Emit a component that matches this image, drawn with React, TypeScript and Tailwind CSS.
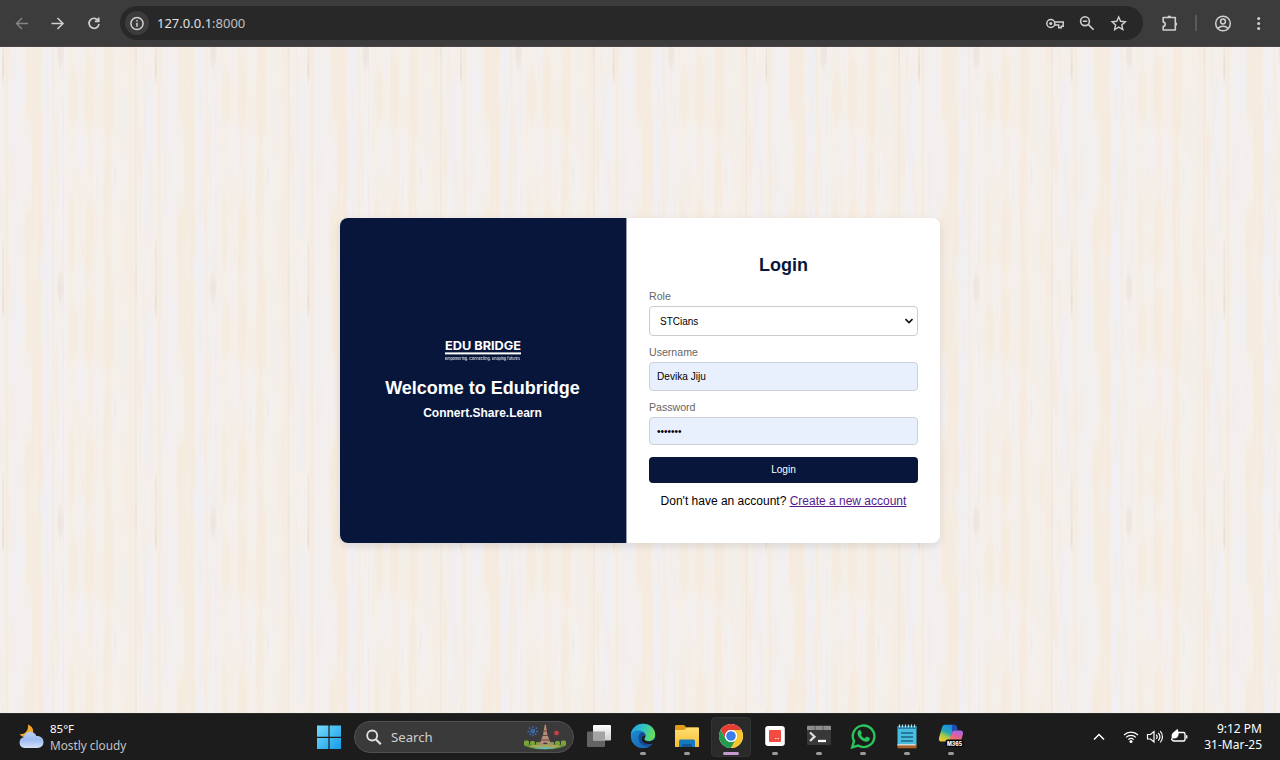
import type { ReactNode } from "react";

const TILE_W = 152.65;
const TILE_H = 234;

type Stripe = { x: number; w: number; y?: number; h?: number; fill: string; o?: number };

const CREAM = "#f6ebdf";
const PALE = "#f3f0ef";
const LILAC = "#f1eff1";
const BROWN = "#e3d4c7";

const stripes: Stripe[] = [
  { x: 0, w: 2, fill: PALE },
  { x: 2.5, w: 1.2, y: 8, h: 30, fill: BROWN, o: 0.7 },
  { x: 2.5, w: 1.2, y: 190, h: 80, fill: BROWN, o: 0.6 },
  { x: 5, w: 3, fill: CREAM, o: 0.7 },
  { x: 9, w: 15, fill: PALE, o: 0.9 },
  { x: 16, w: 9, y: 15, h: 55, fill: LILAC },
  { x: 20, w: 11, y: 85, h: 65, fill: PALE },
  { x: 26, w: 16, y: -30, h: 110, fill: CREAM },
  { x: 32, w: 10, y: 60, h: 110, fill: CREAM },
  { x: 25, w: 18, y: 155, h: 90, fill: CREAM },
  { x: 43, w: 9, fill: LILAC },
  { x: 40, w: 16, y: 200, h: 45, fill: LILAC },
  { x: 52.5, w: 1.5, fill: CREAM },
  { x: 56, w: 10, fill: PALE },
  { x: 57.5, w: 5.5, y: -10, h: 34, fill: BROWN, o: 0.4 },
  { x: 57.5, w: 5.5, y: 222, h: 32, fill: BROWN, o: 0.4 },
  { x: 63, w: 0.8, fill: BROWN, o: 0.3 },
  { x: 69, w: 9, y: 20, h: 60, fill: CREAM, o: 0.7 },
  { x: 69, w: 6, y: 145, h: 80, fill: CREAM, o: 0.7 },
  { x: 76, w: 10, y: 75, h: 60, fill: PALE },
  { x: 78, w: 7, y: 0, h: 45, fill: PALE },
  { x: 78, w: 7, y: 210, h: 50, fill: PALE },
  { x: 85, w: 8, y: 5, h: 80, fill: CREAM },
  { x: 86, w: 8, y: 150, h: 80, fill: CREAM },
  { x: 93, w: 10, y: 80, h: 85, fill: PALE },
  { x: 104, w: 9, y: -10, h: 105, fill: CREAM },
  { x: 104, w: 7, y: 100, h: 140, fill: CREAM, o: 0.9 },
  { x: 114, w: 7, y: 100, h: 60, fill: PALE },
  { x: 115, w: 1, y: 118, h: 20, fill: BROWN, o: 0.5 },
  { x: 119, w: 9, y: 40, h: 60, fill: PALE, o: 0.7 },
  { x: 129, w: 5, fill: CREAM, o: 0.6 },
  { x: 135.3, w: 1, fill: BROWN, o: 0.45 },
  { x: 138, w: 4, y: 75, h: 60, fill: CREAM },
  { x: 143, w: 10, y: 25, h: 170, fill: LILAC },
  { x: 144, w: 5, y: 195, h: 60, fill: PALE },
];

function grain(): Stripe[] {
  let seed = 71;
  const next = () => {
    seed = (seed * 16807) % 2147483647;
    return seed / 2147483647;
  };
  return Array.from({ length: 130 }, () => ({
    x: next() * TILE_W,
    w: 0.7 + next() * 2.6,
    y: next() * TILE_H - 20,
    h: 20 + next() * 70,
    fill: next() > 0.45 ? CREAM : PALE,
    o: 0.3 + next() * 0.35,
  }));
}

const allStripes = [...stripes, ...grain()];

function WoodTexture() {
  return (
    <svg className="absolute inset-0 h-full w-full" aria-hidden="true">
      <defs>
        <g id="grain-tile">
          {allStripes.map((s, i) => {
            const y = s.y ?? -20;
            const h = s.h ?? TILE_H + 40;
            const e = Math.min(12, h / 3);
            const m = s.x + s.w / 2;
            return (
              <path
                key={i}
                d={`M${m} ${y}L${s.x + s.w} ${y + e}V${y + h - e}L${m} ${y + h}L${s.x} ${y + h - e}V${y + e}Z`}
                fill={s.fill}
                opacity={s.o ?? 1}
              />
            );
          })}
        </g>
        <pattern id="wood" width={TILE_W} height={TILE_H} patternUnits="userSpaceOnUse">
          <rect width={TILE_W} height={TILE_H} fill="#f5efe9" />
          <use href="#grain-tile" y={-TILE_H} />
          <use href="#grain-tile" y={TILE_H} />
          <use href="#grain-tile" />
        </pattern>
        <filter id="soften" x="0" y="0" width="1" height="1">
          <feGaussianBlur stdDeviation="0.5 3" />
        </filter>
      </defs>
      <rect x="-20" y="-20" width="1320" height="710" fill="url(#wood)" filter="url(#soften)" />
    </svg>
  );
}

function Line({ children, className, size = 18, sw = 1.6 }: { children: ReactNode; className?: string; size?: number; sw?: number }) {
  return (
    <svg
      width={size}
      height={size}
      viewBox={`0 0 ${size} ${size}`}
      fill="none"
      stroke="currentColor"
      strokeWidth={sw}
      className={`shrink-0 ${className ?? ""}`}
    >
      {children}
    </svg>
  );
}

function BrowserBar() {
  return (
    <header className="flex h-[47px] shrink-0 items-start border-b border-[#4a4547] bg-[#3c3c3c] pt-1.5 text-[#d0d0d0]">
      <div className="flex h-[34px] w-[120px] items-center gap-[18px] pl-[13px]">
        <Line className="text-[#858585]" sw={1.4}><path d="M15 9.5H3.5M9 4 3.5 9.5 9 15" /></Line>
        <Line sw={1.5}><path d="M2.500 9.5h11.500M8.500 4 14 9.5 8.500 15" /></Line>
        <Line sw={1.7}><path d="M13.400 6.800A5 5 0 1 0 14 10M13.700 3.600v3.800H9.900" /></Line>
      </div>
      <div className="flex h-[34px] w-[1023px] items-center rounded-full bg-[#282828] pl-[5px] pr-[15px]">
        <span className="flex h-6 w-6 items-center justify-center rounded-full bg-[#3c3c3c]">
          <Line sw={1.5}>
            <circle cx="9" cy="9.500" r="6.100" />
            <path d="M9 8.700v4M9 5.900v1.600" />
          </Line>
        </span>
        <span className="ml-2 text-[13px] leading-[18px] text-[#e0e0e0]">
          127.0.0.1<span className="text-[#c0c0c0]">:8000</span>
        </span>
        <div className="ml-auto flex items-center gap-[13.5px]">
          <Line size={20} sw={1.500}>
            <circle cx="5.800" cy="10.500" r="4" />
            <circle cx="5.800" cy="10.500" r="1.600" fill="currentColor" stroke="none" />
            <path d="M9.500 9.100h8.700v4.200h-1.900v1.400h-2.600v-2.800H9.500" />
          </Line>
          <Line>
            <circle cx="6" cy="7.200" r="4.400" />
            <path d="M9.200 10.400 14.600 15.800M3.800 7.200h4.400" />
          </Line>
          <Line sw={1.400}><path d="m8.700 3 1.900 4.300 4.700.5-3.500 3.100 1 4.600-4.100-2.400-4.100 2.400 1-4.600-3.500-3.100 4.700-.5Z" /></Line>
        </div>
      </div>
      <div className="flex h-[34px] flex-1 items-center pl-[17px]">
        <Line size={20} sw={1.600}>
          <path d="M3.200 4.500h12.100v12.500H3.200v-3.600c1.300-.2 2-1 2-2.200s-.7-2-2-2.200Z" strokeLinejoin="round" />
          <path d="M7.400 4.500a1.900 1.900 0 0 1 3.800 0ZM15.300 9.200a1.900 1.900 0 0 1 0 3.800Z" fill="currentColor" stroke="none" />
        </Line>
        <span className="ml-[15px] h-4 w-0.5 bg-[#5a5a5a]" />
        <Line size={20} sw={1.500} className="ml-4">
          <circle cx="10" cy="10.500" r="7.300" />
          <circle cx="10" cy="8.500" r="2.400" />
          <path d="M4.900 15.500c1.300-1.500 3.100-2.200 5.100-2.200s3.800.700 5.100 2.200" />
        </Line>
        <Line className="ml-[17px]">
          <g fill="currentColor" stroke="none"><circle cx="8.700" cy="4.500" r="1.500" /><circle cx="8.700" cy="9.500" r="1.500" /><circle cx="8.700" cy="14.500" r="1.500" /></g>
        </Line>
      </div>
    </header>
  );
}

function Brand() {
  return (
    <section className="flex w-[287px] flex-col items-center border-r-[1px] border-[#9a9dab] bg-[#09163b] pt-[119px] pr-px text-white">
      <svg width="76" height="24" viewBox="0 0 76 24" fill="#fff" className="overflow-visible font-['Inter']">
        <text x="0" y="12.500" fontSize="11.800" fontWeight="700" textLength="76" lengthAdjust="spacingAndGlyphs">EDU BRIDGE</text>
        <rect y="15.400" width="76" height="2" />
        <text x="0" y="22.500" fontSize="4" fontWeight="600" textLength="75" lengthAdjust="spacingAndGlyphs" opacity=".8">
          Empowering. Connecting. Shaping futures
        </text>
      </svg>
      <h1 className="mt-[17px] text-[18px] leading-[21px] font-bold">Welcome to Edubridge</h1>
      <p className="mt-[7px] text-[12px] leading-[14px] font-bold">Connert.Share.Learn</p>
    </section>
  );
}

function LoginForm() {
  return (
    <section className="flex flex-1 flex-col bg-white pt-[37px] pr-[22px] pl-[22px] text-[10px]">
      <h2 className="text-center text-[18px] leading-[21px] font-bold text-[#09163b]">Login</h2>
      <label className="mt-[14px] text-[10.600px] leading-[13px] text-[#666]">Role</label>
      <div className="mt-[3px] flex h-[30px] items-center justify-between rounded-[4px] border border-[#ccc] pr-1 pl-[10px] text-black">
        STCians
        <svg width="8" height="6" viewBox="0 0 8 6" fill="none" stroke="#111" strokeWidth="1.600"><path d="M.5 1 4 4.500 7.500 1" /></svg>
      </div>
      <label className="mt-[10px] text-[10.600px] leading-[13px] text-[#666]">Username</label>
      <div className="mt-[3px] flex h-[29px] items-center rounded-[4px] border border-[#ccd1da] bg-[#e8f0fe] px-[7px] pt-px text-[10.100px] text-black">Devika Jiju</div>
      <label className="mt-[10px] text-[10.600px] leading-[13px] text-[#666]">Password</label>
      <div className="mt-[3px] flex h-[28px] items-center rounded-[4px] border border-[#ccd1da] bg-[#e8f0fe] px-[7px] pt-px text-black">
        <span className="text-[10px] leading-none">•••••••</span>
      </div>
      <button className="mt-3 h-[26px] rounded-[4px] bg-[#09163b] pb-px text-[10.100px] text-white">Login</button>
      <p className="mt-[11px] text-center text-[12px] leading-[14px] whitespace-nowrap text-black">
        Don't have an account? <a className="text-[#551a8b] underline">Create a new account</a>
      </p>
    </section>
  );
}

function Weather() {
  return (
    <div className="flex w-[317px] items-center pl-[18px]">
      <svg width="27" height="28" viewBox="0 0 27 28">
        <defs>
          <linearGradient id="cloud" x1="0" y1="0" x2="0" y2="1">
            <stop stopColor="#b9cff8" /><stop offset=".5" stopColor="#9dbcf0" /><stop offset="1" stopColor="#d2e2fc" />
          </linearGradient>
        </defs>
        <path d="M10 1.500c3 1.300 5.200 3.500 5.200 6.500s-1.700 5-4.700 6.200c-2.800.6-6.500-.3-9-3 5 .3 9.200-2.700 8.500-9.700Z" fill="#f0a92d" />
        <path d="M6.500 25a5.500 5.500 0 0 1-.8-10.800C6.500 10.800 9 8.700 12.200 8.700c3 0 5.200 1.700 6.200 4.400 4.100-.3 7.100 2.200 7.100 6 0 3.500-2.500 5.900-6 5.900Z" fill="url(#cloud)" />
      </svg>
      <div className="ml-[5px] leading-4">
        <div className="text-[11.500px] text-white">85°F</div>
        <div className="text-[11.800px] text-[#c3c3c3]">Mostly cloudy</div>
      </div>
    </div>
  );
}

function SearchBox() {
  return (
    <div className="ml-[13px] flex h-8 w-[220px] items-center rounded-full border border-[#505050] bg-[#3a3a3a] pr-[7px] pl-[10px]">
      <Line sw={1.800} className="text-[#e2e2e2]"><circle cx="7.200" cy="7.500" r="5" /><path d="m11 11.500 4.800 4.800" strokeWidth="2.200" /></Line>
      <span className="ml-2 pt-px text-[13.200px] text-[#cfcfcf]">Search</span>
      <svg width="42" height="26" viewBox="0 0 42 26" className="ml-auto">
        <g stroke="#3d70b6" strokeWidth="1.300" strokeDasharray="1.800 1">
          <path d="M9 2v11M3.500 7.500h11M5 3.500l8 8M13 3.500l-8 8" />
        </g>
        <circle cx="32.500" cy="9" r="2.300" fill="#e0404a" opacity=".9" />
        <circle cx="32.500" cy="9" r="3.500" fill="none" stroke="#8e3438" strokeDasharray="1 1.500" opacity=".6" />
        <path d="M0 17.500h5v3h32v-3h5v4c-5 3-12 3.800-21 3.800S5 24.500 0 21.500Z" fill="#568a32" />
        <path d="M4 22c9-2.500 24-2.500 34 0-6 3-28 3.500-34 0Z" fill="#a7a85a" />
        <path d="M10 24c7-1.300 15-1.300 22 0-6 1.500-17 1.500-22 0Z" fill="#6bb9b4" />
        <g fill="#7ca238"><rect x="0" y="16.500" width="5" height="5" rx="1.500" /><rect x="6" y="17" width="5" height="4" rx="1.500" /><rect x="31" y="17" width="5" height="4" rx="1.500" /><rect x="37" y="16.500" width="5" height="5" rx="1.500" /><rect x="12" y="18" width="4" height="3" rx="1" /><rect x="26" y="18" width="4" height="3" rx="1" /></g>
        <path d="M20.800.5h1l1.700 10.500 4 10.500h-3.500c0-4-5.500-4-5.500 0H15l4-10.500Z" fill="#b58b79" />
        <path d="M18.500 11.500h5.500M17 16h8.500M20 7h3" stroke="#68483e" />
      </svg>
    </div>
  );
}

function TaskItem({ children, active, idle }: { children: ReactNode; active?: boolean; idle?: boolean }) {
  return (
    <div className={`flex h-10 w-10 flex-col items-center rounded-[4px] ${active ? "border border-[#323232] bg-[#2a2a2a] pt-[5px]" : "pt-[6px]"}`}>
      <svg width="26" height="26" viewBox="0 0 26 26" className="shrink-0">{children}</svg>
      {!idle && (
        <span className={`mt-[3px] h-[3px] shrink-0 rounded-full ${active ? "w-4 bg-[#c79bd1]" : "w-1.5 bg-[#9b9b9b]"}`} />
      )}
    </div>
  );
}

function Apps() {
  return (
    <div className="ml-[5px] flex items-center gap-1">
      <TaskItem idle>
        <defs>
          <linearGradient id="tv" x1="0" y1="0" x2="0" y2="1"><stop stopColor="#fff" /><stop offset="1" stopColor="#ccc" /></linearGradient>
        </defs>
        <rect x="1" y="8.500" width="18" height="15.500" rx="1" fill="#646464" />
        <rect x="7" y="2" width="18" height="15.500" rx="1" fill="url(#tv)" />
        <path d="M7 8.500h12v9H7z" fill="#a3a3a3" />
      </TaskItem>
      <TaskItem>
        <defs>
          <linearGradient id="edgeTop" x1="0" y1=".2" x2="1" y2=".5"><stop stopColor="#249bdc" /><stop offset=".5" stopColor="#30c5c4" /><stop offset="1" stopColor="#69dd55" /></linearGradient>
          <linearGradient id="edgeLow" x1="0" y1="0" x2="1" y2="1"><stop stopColor="#1d92dc" /><stop offset="1" stopColor="#155ba8" /></linearGradient>
        </defs>
        <circle cx="13" cy="13" r="12.200" fill="url(#edgeLow)" />
        <path d="M.8 12C1.500 5.500 6.500.8 13 .8c7 0 12.200 4.700 12.200 10.700 0 4-3 6.500-6.500 6.500-2.700 0-4.500-1-4.500-2.200 0-.8 1.300-1.300 1.300-3.400C15.500 9.500 12 7.500 8 7.500c-3.500 0-6 2-7.200 4.500Z" fill="url(#edgeTop)" />
        <path d="M8.500 14.500c0-3 1.800-5 4-5.500 2 .7 3 2 3 3.500 0 1.700-1.400 2.300-1.400 3.400 0 1.600 2 2.500 4.600 2.500 2.200 0 4-.7 5.300-1.800-.8 2.300-2.300 4.500-4.500 6-6 1.800-11-2-11-8.100Z" fill="#164d93" />
        <path d="M15.500 12.500c0 1.700-1.300 2.300-1.300 3.400 0 1.600 2 2.500 4.600 2.500 2.500 0 4.800-.9 6.500-3l.5 1.800-2 3c-3.500 1.300-8 1.300-10.800-1.200-2-2-1.500-4.800.5-6Z" fill="#1c1c1c" />
      </TaskItem>
      <TaskItem>
        <defs><linearGradient id="folder" x1="0" y1="0" x2="0" y2="1"><stop stopColor="#ffdf73" /><stop offset="1" stopColor="#f5bd31" /></linearGradient></defs>
        <path d="M1 3.500C1 2.700 1.500 2 2.500 2H10l2.500 2.500H24c.8 0 1 .5 1 1V12H1Z" fill="#df9b18" />
        <path d="M1 7h9l3-2.500h11.500l.5.700V24H1Z" fill="url(#folder)" />
        <path d="M5 24v-5.500c0-1.500.8-2 2-2h12c1.300 0 2 .5 2 2V24Z" fill="#1778c2" />
        <path d="M8 24v-3h10v3Z" fill="#125796" />
      </TaskItem>
      <TaskItem active>
        <circle cx="13" cy="13" r="12" fill="#fff" />
        <path d="M2.600 7A12 12 0 0 1 23.400 7H13a6 6 0 0 0-5.200 9Z" fill="#e53d31" />
        <path d="M2.600 7 7.800 16a6 6 0 0 0 10.400 0L13 25A12 12 0 0 1 2.600 7Z" fill="#239b4d" />
        <path d="M23.400 7A12 12 0 0 1 13 25l5.200-9A6 6 0 0 0 13 7Z" fill="#f8c629" />
        <circle cx="13" cy="13" r="6" fill="#fff" />
        <circle cx="13" cy="13" r="4.800" fill="#3b7ce8" />
      </TaskItem>
      <TaskItem>
        <rect x="3.200" y="3" width="19.600" height="20" rx="3" fill="#fff" />
        <rect x="7" y="7" width="12" height="12" rx="1" fill="#f24c42" />
        <path d="M13 15.500h1.500M15.500 15.500H17" stroke="#ffd6d2" />
      </TaskItem>
      <TaskItem>
        <rect x="1" y="3" width="24" height="19" rx="1.200" fill="#383838" />
        <path d="M1 7V4c0-.7.400-1.200 1.200-1.200h21.600c.8 0 1.200.500 1.200 1.200v3Z" fill="#8d8d8d" />
        <path d="M9 3v4M17 3v4" stroke="#5a5a5a" />
        <path d="m4 9.500 4.500 4.200L4 18" fill="none" stroke="#ddd" strokeWidth="2.300" />
        <path d="M12 18h8" stroke="#fff" strokeWidth="2.300" />
      </TaskItem>
      <TaskItem>
        <path d="M2.200 24.300 4 18.200A10.800 10.800 0 1 1 8 22.500Z" fill="none" stroke="#29c45b" strokeWidth="2.400" />
        <path d="M8.700 7.500c.6-.7 1.600-.7 2 .1l1 2.300c.2.500 0 1-.8 1.800.8 1.700 2.100 2.900 3.900 3.700l1.100-1.400c.4-.4.800-.5 1.300-.2l2.100 1c.6.300.7.700.5 1.500-.5 1.600-2 2.500-3.600 2.400-4.600-.7-8.500-4.700-8.700-8.300 0-1.200.4-2.200 1.200-2.900Z" fill="#29c45b" />
      </TaskItem>
      <TaskItem>
        <path d="M3.500 3h19v20h-19Z" fill="#47bde0" />
        <path d="M3.500 3h19v3h-19Z" fill="#2c80a6" />
        <path d="M5.500 1.500v3M8.500 1.500v3M11.500 1.500v3M14.500 1.500v3M17.500 1.500v3M20.500 1.500v3" stroke="#b9e8f3" strokeWidth="1.200" />
        <path d="M7 10h12M7 14h12M7 18h12" stroke="#1b6484" strokeWidth="1.600" />
        <path d="M3.500 22h17l2-1.500v4.700h-19Z" fill="#ad622c" /><path d="M3.500 21.200h18v1.200h-18Z" fill="#e6e6e2" />
      </TaskItem>
      <TaskItem>
        <defs>
          <linearGradient id="copL" x1=".7" y1="0" x2=".2" y2="1"><stop stopColor="#1989e8" /><stop offset=".45" stopColor="#23a6b8" /><stop offset=".7" stopColor="#a9cb45" /><stop offset="1" stopColor="#f4c830" /></linearGradient>
          <linearGradient id="copR" x1=".6" y1="0" x2=".3" y2="1"><stop stopColor="#a56bea" /><stop offset=".5" stopColor="#dd5ca0" /><stop offset="1" stopColor="#f38352" /></linearGradient>
        </defs>
        <path d="M7 1.800h8.500c2 0 2.800 1 3.300 2.700L19.500 7c-4 0-4.800 1.200-5.700 4l-1.600 5c-.8 2-1.500 2.500-3.500 2.500H3.500C1 18.500.5 16.500 1.200 14L4 4.500C4.600 2.600 5.300 1.800 7 1.800Z" fill="url(#copL)" />
        <path d="M14 1.800h1.500c2 0 2.800 1 3.300 2.700L19.500 7c-3.300 0-4.500.700-5.400 3Z" fill="#244bb6" />
        <path d="M19 7.500h3.200c2.600 0 3.300 1.700 2.600 4.200l-1.600 5.800H11l2.800-7.500c.7-2 2-2.500 5.200-2.500Z" fill="url(#copR)" />
        <rect x="7.500" y="16.500" width="18" height="7.500" rx="2" fill="#050505" />
        <text x="9" y="22.500" fontSize="6" fontWeight="800" fill="#fff" textLength="15" lengthAdjust="spacingAndGlyphs" className="font-['Inter']">M365</text>
      </TaskItem>
    </div>
  );
}

function Tray() {
  return (
    <div className="ml-auto flex items-center pr-[18px] text-white">
      <Line size={14} sw={1.500}><path d="m2 9.500 5-5 5 5" /></Line>
      <Line size={18} sw={1.200} className="ml-4">
        <path d="M2 7a10 10 0 0 1 14 0M4.100 9.400a7 7 0 0 1 9.800 0M6.300 11.600a4 4 0 0 1 5.400 0" />
        <circle cx="9" cy="13.500" r="1.500" fill="currentColor" stroke="none" />
      </Line>
      <Line size={18} sw={1.200} className="ml-[6px]">
        <path d="M1.500 6.500v4.500h3L8 14V3.500l-3.500 3ZM10.200 6.800c1.300 1.200 1.300 2.800 0 4M12.200 5c2.300 2 2.300 5.600 0 7.600M14.200 3.200c3 3 3 8.100 0 11.100" />
      </Line>
      <Line size={18} sw={1.400} className="ml-[6px]">
        <path d="M8 4.500h5.500c1 0 1.500.600 1.500 1.500v5.500c0 1-.500 1.500-1.500 1.500H4c-1 0-1.600-.400-1.800-1.500M16.700 7.200v3.200" />
        <path d="M7.500.8c1.300 3 1.500 5.700.5 7.700-1.400 2-3.500 2.200-5.200 1.700l-1.300 2.300-.700-.8 1-2.200C.8 5 4 4.500 7.500.8Z" fill="currentColor" stroke="none" />
      </Line>
      <div className="ml-[15px] flex w-[59px] flex-col items-end text-[12px] leading-4 whitespace-nowrap">
        <div>9:12 PM</div>
        <div>31-Mar-25</div>
      </div>
    </div>
  );
}

export default function App() {
  return (
    <div className="flex h-[760px] w-[1280px] flex-col overflow-hidden bg-black font-['Noto_Sans',sans-serif]">
      <BrowserBar />
      <main className="relative flex flex-1 justify-center overflow-hidden pt-[171px] font-['Liberation_Sans',Arial,sans-serif]">
        <WoodTexture />
        <div className="relative flex h-[325px] w-[600px] overflow-hidden rounded-[8px] shadow-[0_3px_8px_rgba(0,0,0,0.1)]">
          <Brand />
          <LoginForm />
        </div>
      </main>
      <footer className="flex h-[47px] shrink-0 items-center border-t border-[#2b2b2b] bg-[#1c1c1c]">
        <Weather />
        <svg width="24" height="24" viewBox="0 0 24 24">
          <defs><linearGradient id="win" x1="0" y1="0" x2="1" y2="1"><stop stopColor="#74dcfb" /><stop offset="1" stopColor="#159be9" /></linearGradient></defs>
          <path d="M0 .5h11.400v11.200H0ZM12.600.5H24v11.200H12.600ZM0 12.900h11.400v11.100H0ZM12.600 12.900H24v11.100H12.600Z" fill="url(#win)" />
        </svg>
        <SearchBox />
        <Apps />
        <Tray />
      </footer>
    </div>
  );
}
